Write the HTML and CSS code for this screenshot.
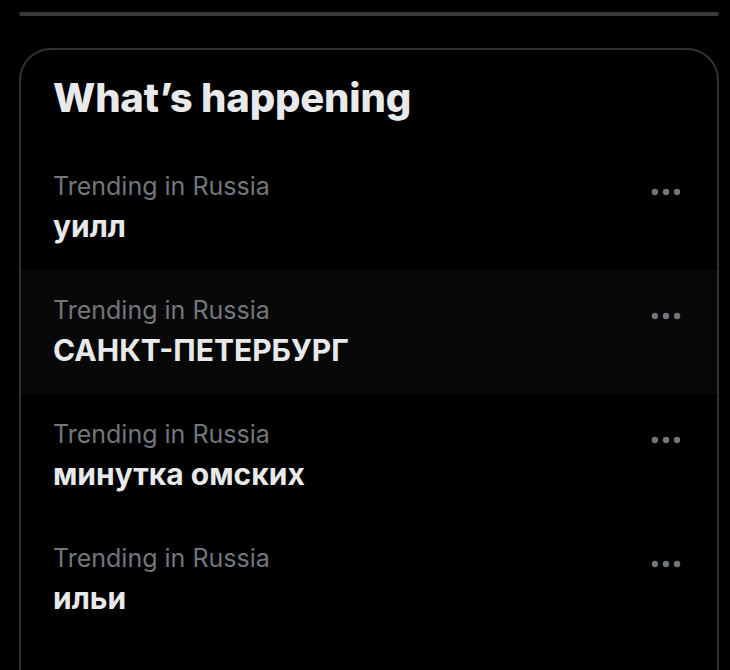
FILE: index.html
```html
<!DOCTYPE html>
<html lang="en">
<head>
    <meta charset="UTF-8">
    <meta name="viewport" content="width=device-width, initial-scale=1.0">
    <title>What's happening</title>
    <link rel="stylesheet" href="styles.css">
</head>
<body>
    <div class="search_line"></div>

    <section class="card">
        <h2 class="card_title">What’s happening</h2>

        <div class="trend">
            <div class="trend_text">
                <p class="trend_meta">Trending in Russia</p>
                <p class="trend_name">уилл</p>
            </div>
            <svg class="more" viewBox="0 0 24 24"><circle cx="5" cy="12" r="2"/><circle cx="12" cy="12" r="2"/><circle cx="19" cy="12" r="2"/></svg>
        </div>

        <div class="trend hover">
            <div class="trend_text">
                <p class="trend_meta">Trending in Russia</p>
                <p class="trend_name">САНКТ-ПЕТЕРБУРГ</p>
            </div>
            <svg class="more" viewBox="0 0 24 24"><circle cx="5" cy="12" r="2"/><circle cx="12" cy="12" r="2"/><circle cx="19" cy="12" r="2"/></svg>
        </div>

        <div class="trend">
            <div class="trend_text">
                <p class="trend_meta">Trending in Russia</p>
                <p class="trend_name">минутка омских</p>
            </div>
            <svg class="more" viewBox="0 0 24 24"><circle cx="5" cy="12" r="2"/><circle cx="12" cy="12" r="2"/><circle cx="19" cy="12" r="2"/></svg>
        </div>

        <div class="trend">
            <div class="trend_text">
                <p class="trend_meta">Trending in Russia</p>
                <p class="trend_name">ильи</p>
            </div>
            <svg class="more" viewBox="0 0 24 24"><circle cx="5" cy="12" r="2"/><circle cx="12" cy="12" r="2"/><circle cx="19" cy="12" r="2"/></svg>
        </div>
    </section>
</body>
</html>
```

FILE: styles.css
```css
* {
    margin: 0;
    padding: 0;
    box-sizing: border-box;
    font-family: Inter, 'Noto Sans', sans-serif;
}

html, body {
    height: 670px;
    overflow: hidden;
}

body {
    background-color: #000;
    padding: 12px 11px 0 19px;
}

.search_line {
    height: 4px;
    border-radius: 2px;
    background-color: #383b3e;
}

.card {
    margin-top: 32px;
    width: 700px;
    height: 640px;
    border: 2px solid #2f3336;
    border-bottom: none;
    border-radius: 32px 32px 0 0;
}

.card_title {
    padding: 24px 32px;
    font-size: 40px;
    line-height: 48px;
    font-weight: 800;
    letter-spacing: -0.2px;
    color: #e7e9ea;
}

.trend {
    display: flex;
    justify-content: space-between;
    align-items: flex-start;
    padding: 24px 32px;
    height: 124px;
}

.trend.hover {
    background-color: #080808;
}

.trend_meta {
    font-size: 25px;
    line-height: 32px;
    color: #71767b;
}

.trend_name {
    margin-top: 4px;
    font-size: 30px;
    line-height: 40px;
    font-weight: 700;
    color: #e7e9ea;
}

.more {
    width: 38px;
    height: 38px;
    margin-top: 3px;
    fill: #71767b;
}
```
